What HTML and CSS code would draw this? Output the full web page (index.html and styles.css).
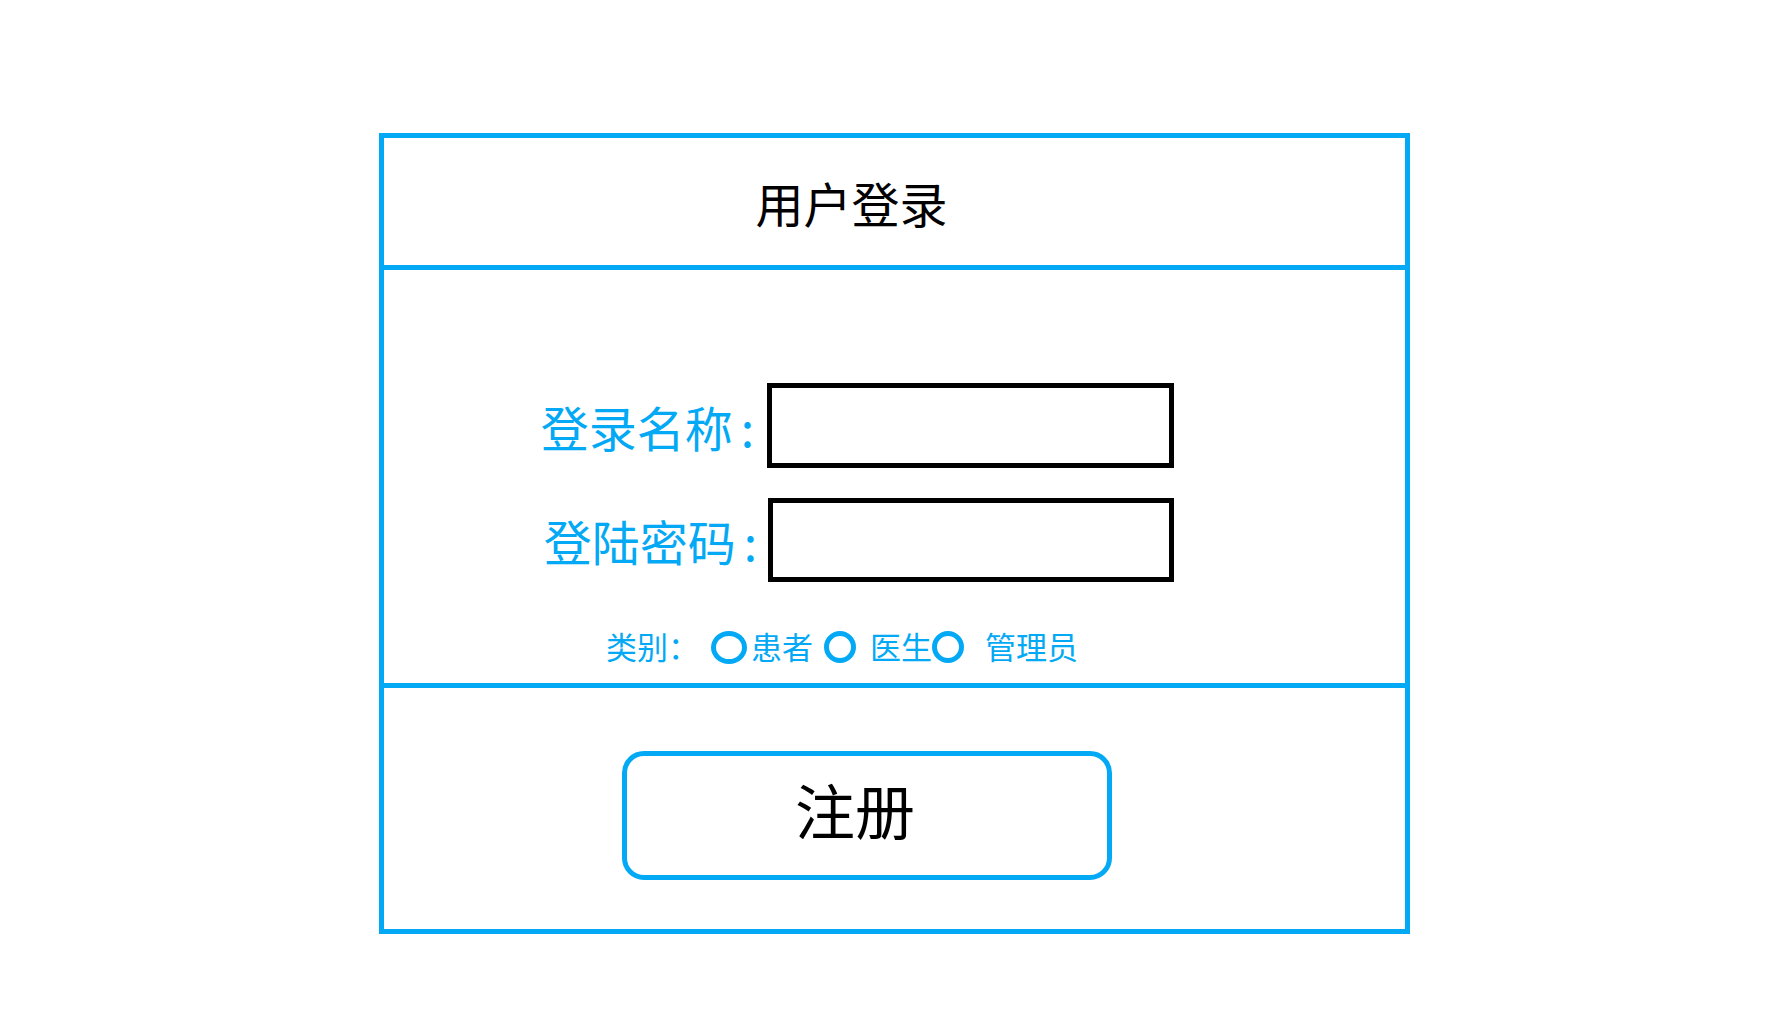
FILE: index.html
```html
<!DOCTYPE html>
<html lang="zh-CN">
<head>
<meta charset="utf-8">
<title>用户登录</title>
<link rel="stylesheet" href="styles.css">
</head>
<body>
<div class="page">
  <div class="panel">
    <div class="panel-head">
      <h1 class="title">用户登录</h1>
    </div>
    <div class="panel-body">
      <div class="form-grid">
        <label class="field-label">登录名称<span class="colon">:</span></label>
        <div class="field-input field-input-first"></div>
        <label class="field-label field-label-second">登陆密码<span class="colon">:</span></label>
        <div class="field-input field-input-second"></div>
      </div>
      <div class="category-row">
        <span class="category-label">类别：</span>
        <span class="radio radio-wide"></span>
        <span class="opt opt-patient">患者</span>
        <span class="radio radio-doctor"></span>
        <span class="opt opt-doctor">医生</span>
        <span class="radio radio-admin"></span>
        <span class="opt opt-admin">管理员</span>
      </div>
    </div>
    <div class="panel-foot">
      <button class="register-btn" type="button">注册</button>
    </div>
  </div>
</div>
</body>
</html>
```

FILE: styles.css
```css
html, body {
  margin: 0;
  padding: 0;
  background: #ffffff;
}

body {
  font-family: "Noto Sans CJK SC", "Noto Sans", sans-serif;
  width: 1792px;
  height: 1024px;
  overflow: hidden;
}

.page {
  padding: 133px 0 0 379px;
}

.panel {
  width: 1031px;
  height: 801px;
  box-sizing: border-box;
  border: 5px solid #03a9f4;
  display: flex;
  flex-direction: column;
}

.panel-head {
  height: 127px;
  border-bottom: 5px solid #03a9f4;
  display: flex;
  align-items: center;
  justify-content: center;
  padding-right: 86px;
}

.title {
  margin: 0;
  font-size: 48px;
  font-weight: 400;
  line-height: 1;
  color: #000000;
}

.panel-body {
  box-sizing: border-box;
  height: 418px;
  border-bottom: 5px solid #03a9f4;
  padding-top: 113px;
}

.form-grid {
  display: grid;
  grid-template-columns: 370px 407px;
  grid-template-rows: 85px 84px;
  column-gap: 13px;
  row-gap: 30px;
  align-items: center;
}

.field-label {
  justify-self: end;
  font-size: 48px;
  line-height: 1;
  color: #03a9f4;
  white-space: nowrap;
}

.colon {
  margin-left: 8px;
}

.field-label-second {
  margin-right: -3px;
}

.field-input {
  box-sizing: border-box;
  border: 5px solid #000000;
  background: #ffffff;
  width: 407px;
  height: 85px;
}

.field-input-second {
  height: 84px;
  margin-left: 1px;
  width: 406px;
}

.category-row {
  display: flex;
  align-items: center;
  height: 40px;
  margin-top: 43px;
  margin-left: 222px;
  color: #03a9f4;
  font-size: 31px;
  line-height: 1;
  white-space: nowrap;
}

.category-label {
  width: 93px;
}

.radio {
  box-sizing: border-box;
  border: 5px solid #03a9f4;
  border-radius: 50%;
  width: 32px;
  height: 32px;
  flex: none;
  margin-top: 4px;
}

.radio-wide {
  width: 36px;
  height: 33px;
  margin-left: 12px;
}

.opt-patient {
  margin-left: 4px;
}

.radio-doctor {
  margin-left: 11px;
}

.opt-doctor {
  margin-left: 14px;
}

.radio-admin {
  margin-left: 0;
}

.opt-admin {
  margin-left: 21px;
}

.panel-foot {
  flex: 1;
  padding: 63px 0 0 238px;
}

.register-btn {
  box-sizing: border-box;
  width: 490px;
  height: 129px;
  border: 5px solid #03a9f4;
  border-radius: 22px;
  background: #ffffff;
  font-family: "Noto Sans CJK SC", "Noto Sans", sans-serif;
  font-size: 60px;
  line-height: 1;
  color: #000000;
  padding: 0 24px 14px 0;
  display: flex;
  align-items: center;
  justify-content: center;
  cursor: pointer;
}
```
